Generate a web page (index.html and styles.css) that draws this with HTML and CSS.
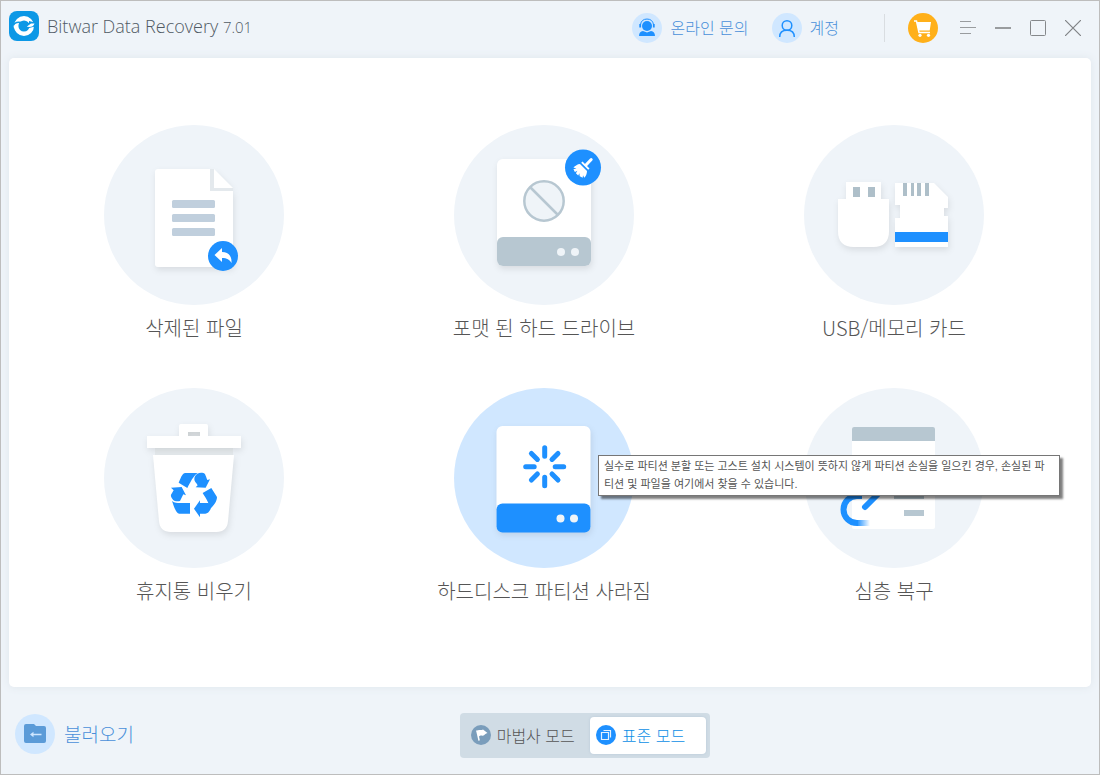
FILE: index.html
```html
<!DOCTYPE html>
<html lang="ko">
<head>
<meta charset="utf-8">
<title>Bitwar Data Recovery</title>
<link rel="stylesheet" href="styles.css">
</head>
<body>
<div class="window">
  <header class="titlebar">
    <svg class="logo" viewBox="0 0 30 30" aria-hidden="true">
      <rect width="30" height="30" rx="8" fill="#0c98e6"/>
      <circle cx="15" cy="15" r="7.800" fill="none" stroke="#fff" stroke-width="4.400"/>
      <path d="M3 16c2-4 5-5.500 9-4.500" fill="none" stroke="#0c98e6" stroke-width="1.600"/>
      <path d="M20 10l6 1.500v4L20 17z" fill="#0c98e6"/>
      <path d="M25.500 12.500c-1 3-3 3.800-8 3.300l4.500-3.300z" fill="#fff"/>
      <path d="M10 12c4-2 8-1 11 .5l-2.500 2c-1 .5-1 1 0 1.800-.5 2-2 3-4 3-3 0-5-2.500-4.500-7.300z" fill="#0c98e6"/>
      <path d="M4.500 14.500c1 1 2.500 0 4.500-1.200v4.200H5z" fill="#fff"/>
    </svg>
    <h1 class="title">Bitwar Data Recovery <span class="version">7.01</span></h1>

    <button class="link" type="button">
      <svg class="link-icon" viewBox="0 0 30 30" aria-hidden="true">
        <circle cx="15" cy="15" r="15" fill="#d0e7ff"/>
        <circle cx="15" cy="13" r="5" fill="#1e90ff"/>
        <path d="M8.500 11.500a6.600 6.600 0 0 1 13 0" fill="none" stroke="#1e90ff"/>
        <path d="M8.200 11v3.500M21.800 11v3.500" stroke="#1e90ff" stroke-width="1.800"/>
        <path d="M7 23c0-3 1.500-4.500 4-5l4 1.500 4-1.500c2.500.5 4 2 4 5z" fill="#1e90ff"/>
      </svg>
      <span>온라인 문의</span>
    </button>
    <button class="link" type="button">
      <svg class="link-icon" viewBox="0 0 30 30" aria-hidden="true">
        <circle cx="15" cy="15" r="15" fill="#d0e7ff"/>
        <g fill="none" stroke="#1e90ff" stroke-width="1.500">
          <circle cx="15" cy="12.500" r="4.800"/>
          <path d="M7.700 24c0-4.500 3-6.700 7.300-6.700s7.300 2.200 7.300 6.700"/>
        </g>
      </svg>
      <span>계정</span>
    </button>

    <div class="controls">
      <button class="control cart" type="button" aria-label="장바구니">
        <svg viewBox="0 0 30 30">
          <circle cx="15" cy="15" r="15" fill="#ffb01a"/>
          <path d="M6 8h2.500l2.500 11.500h11" fill="none" stroke="#fff" stroke-width="1.500"/>
          <path d="M8.500 9H23l-1.300 8.500H10.500z" fill="#fff"/>
          <circle cx="12" cy="22.300" r="1.600" fill="#fff"/><circle cx="20.500" cy="22.300" r="1.600" fill="#fff"/>
        </svg>
      </button>
      <button class="control" type="button" aria-label="메뉴">
        <svg viewBox="0 0 16 16" fill="none" stroke="#999c9f"><path d="M0 1.500h11M0 7.500h16M0 13.500h11"/></svg>
      </button>
      <button class="control" type="button" aria-label="최소화">
        <svg viewBox="0 0 16 16" fill="none" stroke="#999c9f" stroke-width="2"><path d="M0 8h16"/></svg>
      </button>
      <button class="control" type="button" aria-label="최대화">
        <svg viewBox="0 0 16 16" fill="none" stroke="#85888b"><rect x=".5" y=".5" width="15" height="15" rx="1"/></svg>
      </button>
      <button class="control" type="button" aria-label="닫기">
        <svg viewBox="0 0 16 16" fill="none" stroke="#808386" stroke-width="1.200"><path d="M0 0l16 16M16 0L0 16"/></svg>
      </button>
    </div>
  </header>

  <main class="panel">
    <div class="tile">
      <button class="tile-button" type="button">
        <svg class="art" viewBox="0 0 180 180" aria-hidden="true">
          <g class="raised">
            <path d="M54 44h52v22h23v73q0 3-3 3H54q-3 0-3-3V47q0-3 3-3z" fill="#fff"/>
            <path d="M110 44l19 19h-19z" fill="#fff"/>
          </g>
          <path d="M106 44h4v19h19v3h-23z" fill="#e4e9ed"/>
          <g fill="#c0cfdd">
            <rect x="68" y="75" width="43" height="8" rx="1.500"/><rect x="68" y="89" width="43" height="8" rx="1.500"/><rect x="68" y="103" width="43" height="8" rx="1.500"/>
          </g>
          <circle cx="119" cy="131" r="15" fill="#1e90ff"/>
          <path d="M110.500 130l7.500-7v4c6.500 0 10 4 9.500 11-2-3.500-4.500-5-9.500-5v4z" fill="#fff"/>
        </svg>
        <span class="label">삭제된 파일</span>
      </button>
    </div>

    <div class="tile">
      <button class="tile-button" type="button">
        <svg class="art" viewBox="0 0 180 180" aria-hidden="true">
          <rect class="raised" x="43" y="34" width="94" height="107" rx="6" fill="#fff"/>
          <rect x="43" y="112" width="94" height="29" rx="6" fill="#b7c7d1"/>
          <circle cx="107" cy="127" r="4" fill="#eff4f8"/><circle cx="121" cy="127" r="4" fill="#eff4f8"/>
          <g fill="#eff4f8" stroke="#b7c7d1" stroke-width="2.500"><circle cx="90" cy="76" r="19.700"/><path d="M76 62l28 28"/></g>
          <circle cx="129" cy="42.500" r="18" fill="#1e90ff"/>
          <path d="M132 40l5.200-5.500" stroke="#fff" stroke-width="3" stroke-linecap="round"/>
          <path d="M128.500 36.500l7 7-1.300 1.300-7-7z" fill="#fff"/>
          <path d="M126 39l7 7c0 3-1.200 5.300-2.700 6.800l-1.300-2.500-.3 2.500-3-1.500-.3-3-1.200 2.200-2.300-2.200 1.500-2.500-2.500 1.200-1.500-2.700 3-.9-3-.9c2-1.500 4-3.500 6.600-3.500z" fill="#fff"/>
        </svg>
        <span class="label">포맷 된 하드 드라이브</span>
      </button>
    </div>

    <div class="tile">
      <button class="tile-button" type="button">
        <svg class="art" viewBox="0 0 180 180" aria-hidden="true">
          <g class="raised" fill="#fff">
            <path d="M42 57h35v17h8v32q0 16-16 16H50q-16 0-16-16V74h8z"/>
            <path d="M91 58h39l14 14v11h-4v8h4v31H91V93h5V80h-5z"/>
          </g>
          <path d="M49 62h7v10h-7zM64 62h7v10h-7zM99 58h4v13h-4zM107 58h3v13h-3zM113 58h4v13h-4zM121 58h4v13h-4z" fill="#aebfc9"/>
          <path d="M91 107h53v10H91z" fill="#1e90ff"/>
        </svg>
        <span class="label">USB/메모리 카드</span>
      </button>
    </div>

    <div class="tile">
      <button class="tile-button" type="button">
        <svg class="art" viewBox="0 0 180 180" aria-hidden="true">
          <path d="M84 44h12v4H84z" fill="#e0e5e8"/>
          <path d="M51 60h78v7H51z" fill="#e7ecef"/>
          <g class="raised" fill="#fff">
            <path d="M49 67h81l-6 66q-1 11-12 11H67q-11 0-12-11z"/>
            <path fill-rule="evenodd" d="M75 48V38q0-2 2-2h25q2 0 2 2v10h33v12H43V48zM84 44v4h12v-4z"/>
          </g>
          <g transform="translate(-4 -5) scale(.3333)" fill="#1e90ff">
            <path d="M256 270h37c-14 10-22 28-31 45l-26-16c5-10 10-29 20-29z"/>
            <path d="M292 272c6-3 12-3 18-2 6 0 9 14 12 21l8-2-13 25-30-1 6-6c-4-7-10-12-10-18 0-8 4-13 9-17z"/>
            <path d="M308 330l26-15 17 27c0 13-10 27-22 37 0-18-12-34-21-49z"/>
            <path d="M300 403l-18-26 18-25v8h26c3 6 6 13 6 18-5 9-9 14-16 14h-16z"/>
            <path d="M216 354c8 6 16 6 24 6h30v32h-32c-10 0-16-22-22-38z"/>
            <path d="M213 314l32-2 13 25-8-3-10 20c-9 2-17 0-21-4-5-7-7-11-6-15l8-13z"/>
          </g>
        </svg>
        <span class="label">휴지통 비우기</span>
      </button>
    </div>

    <div class="tile">
      <button class="tile-button is-hovered" type="button" aria-describedby="partition-tip">
        <svg class="art" viewBox="0 0 180 180" aria-hidden="true">
          <rect class="raised" x="42.500" y="38" width="94" height="106" rx="6" fill="#fff"/>
          <rect x="42.500" y="115.500" width="94" height="29" rx="6" fill="#1e90ff"/>
          <circle cx="106.500" cy="130.500" r="4" fill="#eff4f8"/><circle cx="120" cy="130.500" r="4" fill="#eff4f8"/>
          <g transform="translate(90.700 78.700)" stroke="#1e90ff" stroke-width="5" stroke-linecap="round">
            <path d="M0-19v8.500M0 19v-8.500M-19 0h8.500M19 0h-8.500M-13.300-13.300l6 6M13.300 13.300l-6-6M-13.300 13.300l6-6M13.300-13.300l-6 6"/>
          </g>
        </svg>
        <span class="label">하드디스크 파티션 사라짐</span>
      </button>
      <p class="tooltip" id="partition-tip" role="tooltip">실수로 파티션 분할 또는 고스트 설치 시스템이 뜻하지 않게 파티션 손실을 일으킨 경우, 손실된 파티션 및 파일을 여기에서 찾을 수 있습니다.</p>
    </div>

    <div class="tile">
      <button class="tile-button" type="button">
        <svg class="art" viewBox="0 0 180 180" aria-hidden="true">
          <defs>
            <linearGradient id="fade" gradientUnits="userSpaceOnUse" x1="53" y1="0" x2="66" y2="0"><stop offset="0" stop-color="#1e90ff"/><stop offset="1" stop-color="#1e90ff" stop-opacity="0"/></linearGradient>
          </defs>
          <rect x="48" y="39" width="83" height="102" rx="2" fill="#fff"/>
          <path d="M50 39h79q2 0 2 2v12H48V41q0-2 2-2z" fill="#b7c7d1"/>
          <path d="M90 105h30v6H90zM100 122h20v6h-20z" fill="#b7c7d1"/>
          <path d="M53 135h13" stroke="url(#fade)" stroke-width="6"/>
          <path d="M58 108h-5a13.500 13.500 0 0 0 0 27h1" fill="none" stroke="#1e90ff" stroke-width="6"/>
          <path d="M61 119l16-16" stroke="#1e90ff" stroke-width="6" stroke-linecap="round"/>
        </svg>
        <span class="label">심층 복구</span>
      </button>
    </div>
  </main>

  <footer class="bottombar">
    <button class="import" type="button">
      <svg class="import-icon" viewBox="0 0 40 40" aria-hidden="true">
        <circle cx="20" cy="20" r="20" fill="#d0e7ff"/>
        <path d="M9 12q0-2 2-2h8l2 2h8q2 0 2 2v13q0 2-2 2H11q-2 0-2-2z" fill="#5b9bd8"/>
        <path d="M15 20.500l3.500-2.800v2h8v1.600h-8v2z" fill="#d0e7ff"/>
      </svg>
      <span>불러오기</span>
    </button>
    <div class="modes" role="group" aria-label="모드">
      <button class="mode" type="button" aria-pressed="false">
        <svg class="mode-icon" viewBox="0 0 20 20" aria-hidden="true">
          <circle cx="10" cy="10" r="10" fill="#7a9dbb"/>
          <path d="M6 6l2 9" stroke="#fff" stroke-width="1.500" stroke-linecap="round"/>
          <path d="M6 6c2-2 4 0 6-1.500L16.500 8c-2 0-3 3-5 2.700C10 10.500 9 10.500 7.500 12z" fill="#fff"/>
        </svg>
        <span>마법사 모드</span>
      </button>
      <button class="mode is-active" type="button" aria-pressed="true">
        <svg class="mode-icon" viewBox="0 0 20 20" aria-hidden="true">
          <circle cx="10" cy="10" r="10" fill="#1e90ff"/>
          <path d="M5.500 7.500h7v7h-7zM7.500 5.500h7v7" fill="none" stroke="#e4f2ff" stroke-width="1.200"/>
        </svg>
        <span>표준 모드</span>
      </button>
    </div>
  </footer>
</div>
</body>
</html>
```
FILE: styles.css
```css
* {
  box-sizing: border-box;
}

body {
  margin: 0;
  font-family: "Noto Sans CJK KR", "Noto Sans", sans-serif;
  font-weight: 300;
  color: #555;
}

button {
  margin: 0;
  padding: 0;
  border: 0;
  background: none;
  color: inherit;
  font: inherit;
  cursor: pointer;
}

svg {
  display: block;
  flex: none;
}

.window {
  display: flex;
  flex-direction: column;
  min-height: 100vh;
  border: 1px solid #bdbdbd;
  background: #eff4f9;
}

/* Title bar */
.titlebar {
  display: flex;
  align-items: center;
  height: 57px;
  padding: 0 18px 3px 8px;
}

.logo {
  width: 30px;
  height: 30px;
  margin-bottom: 5px;
}

.title {
  flex: 1;
  margin: 0 0 3px 8px;
  font-family: "Open Sans", "Noto Sans", sans-serif;
  font-size: 18px;
  font-weight: 300;
  line-height: 24px;
  color: #505a64;
}

.version {
  font-size: 15px;
}

.link {
  display: flex;
  align-items: center;
  gap: 8px;
  margin-right: 23px;
  font-size: 16px;
  line-height: 24px;
  color: #4a90d9;
}

.link span {
  padding-bottom: 2px;
}

.link-icon {
  width: 30px;
  height: 30px;
}

.controls {
  display: flex;
  align-items: center;
  gap: 19px;
  height: 28px;
  margin-left: 22px;
  padding-left: 23px;
  border-left: 1px solid #d9dde1;
}

.control {
  width: 16px;
  height: 16px;
}

.cart {
  width: 30px;
  height: 30px;
  margin-right: 3px;
}

/* Recovery choices */
.panel {
  display: grid;
  flex: 1;
  grid-template-columns: repeat(3, 1fr);
  grid-auto-rows: min-content;
  row-gap: 45px;
  margin: 0 8px;
  padding: 67px 22px 67px 10px;
  border-radius: 5px;
  background: #fff;
  box-shadow: 0 0 8px #dfe6ec;
}

.tile {
  position: relative;
  display: flex;
  justify-content: center;
}

.tile-button {
  display: flex;
  flex-direction: column;
  align-items: center;
  gap: 8px;
}

.art {
  width: 180px;
  height: 180px;
  border-radius: 50%;
  background: #eff4f9;
}

.is-hovered .art {
  background: #d0e7ff;
}

.raised {
  filter: drop-shadow(1px 3px 3px #00000018);
}

.label {
  font-size: 20px;
  line-height: 30px;
}

.tooltip {
  position: absolute;
  z-index: 1;
  top: 67px;
  left: calc(50% + 54px);
  width: 462px;
  margin: 0;
  padding: 1px 6px 2px 5px;
  border: 1px solid #767676;
  background: #fff;
  box-shadow: 3px 3px 2px #00000080;
  font-family: "Liberation Sans", "Noto Sans CJK KR", sans-serif;
  font-size: 11px;
  font-weight: 400;
  line-height: 18px;
}

/* Bottom bar */
.bottombar {
  display: grid;
  grid-template-columns: 46fr auto 39fr;
  align-items: center;
  height: 87px;
  padding-top: 9px;
}

.import {
  display: flex;
  align-items: center;
  justify-self: start;
  gap: 9px;
  margin: 0 0 3px 14px;
  font-size: 19px;
  line-height: 28px;
  color: #4a90d9;
}

.import-icon {
  width: 40px;
  height: 40px;
}

.modes {
  display: flex;
  gap: 4px;
  padding: 4px;
  border-radius: 4px;
  background: #d0dce5;
}

.mode {
  display: flex;
  align-items: center;
  gap: 6px;
  height: 37px;
  padding: 0 11px 0 7px;
  border-radius: 4px;
  font-size: 16px;
  line-height: 24px;
}

.mode.is-active {
  padding: 0 21px 0 6px;
  background: #fff;
  box-shadow: 0 0 3px #b9c9d8;
  color: #0c8fe6;
}

.mode-icon {
  width: 20px;
  height: 20px;
}
```
